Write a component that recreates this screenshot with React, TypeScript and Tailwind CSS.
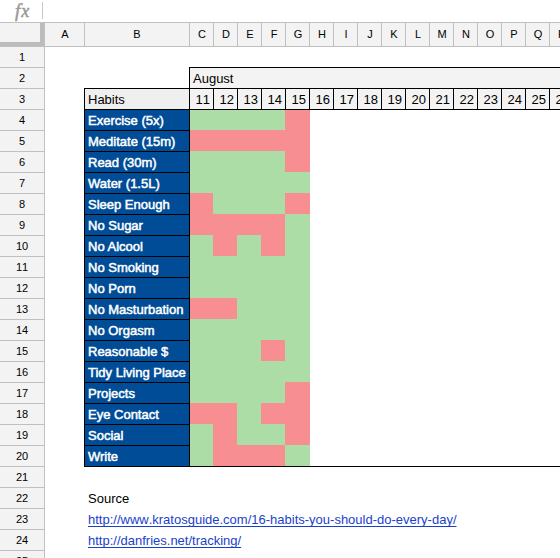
import React from 'react';

const columns = ['C', 'D', 'E', 'F', 'G', 'H', 'I', 'J', 'K', 'L', 'M', 'N', 'O', 'P', 'Q', 'R'];

// One letter per tracked day: g = done, r = missed
const habits: [string, string][] = [
  ['Exercise (5x)', 'ggggr'],
  ['Meditate (15m)', 'rrrrr'],
  ['Read (30m)', 'ggggr'],
  ['Water (1.5L)', 'ggggg'],
  ['Sleep Enough', 'rgggr'],
  ['No Sugar', 'rrrrg'],
  ['No Alcool', 'grgrg'],
  ['No Smoking', 'ggggg'],
  ['No Porn', 'ggggg'],
  ['No Masturbation', 'rrggg'],
  ['No Orgasm', 'ggggg'],
  ['Reasonable $', 'gggrg'],
  ['Tidy Living Place', 'ggggg'],
  ['Projects', 'ggggr'],
  ['Eye Contact', 'rrgrr'],
  ['Social', 'grggr'],
  ['Write', 'grrrg'],
];

const dayWidths = ['w-[23px]', 'w-6', 'w-6', 'w-6', 'w-[25px]'];

function Row({ n, children }: { n: number; children?: React.ReactNode }) {
  return (
    <div className="flex h-[21px] w-[600px] shrink-0">
      <div className="h-[21px] w-11 shrink-0 border-t border-[#c0c0c0] bg-[#f3f3f3] text-center text-[11px] leading-[20px] [font-kerning:none]">
        {n}
      </div>
      <div className={`w-10 shrink-0 border-l border-[#c0c0c0] ${n === 1 ? 'border-t' : ''}`} />
      {children}
    </div>
  );
}

function TextCell({ children }: { children: React.ReactNode }) {
  return <div className="pt-px pl-1 leading-[21px] whitespace-nowrap">{children}</div>;
}

function Link({ href }: { href: string }) {
  return (
    <a href={href} className="text-[#1a3fcb] underline decoration-1 underline-offset-[2px] [font-kerning:none] [text-decoration-skip-ink:none]">
      {href}
    </a>
  );
}

export default function App() {
  return (
    <div className="flex h-[558px] w-[560px] flex-col overflow-hidden bg-white font-['Liberation_Sans',Arial,sans-serif] text-[13px] text-black">
      <div className="flex h-[22px] shrink-0">
        <div className="h-[22px] w-[42px] pl-[15px] font-['Liberation_Serif',serif] text-[19px] leading-[21px] text-[#999] italic [-webkit-text-stroke:0.5px_#999]">
          f<span className="ml-px text-[18px]">x</span>
        </div>
        <div className="mt-0.5 h-[17px] w-px bg-[#c8c8c8]" />
      </div>

      <div className="flex h-6 w-[600px] shrink-0 border-t border-[#c0c0c0] bg-[#f3f3f3] text-center text-[11px] leading-[23px]">
        <div className="h-[23px] w-11 shrink-0 border-r-4 border-b-4 border-[#bcbcbc]" />
        <div className="w-10 shrink-0 border-l border-[#c0c0c0] pl-px">A</div>
        <div className="w-[105px] shrink-0 border-l border-[#c0c0c0]">B</div>
        {columns.map((c) => (
          <div key={c} className="w-6 shrink-0 border-l border-[#c0c0c0] pl-px">{c}</div>
        ))}
      </div>

      <div className="flex shrink-0 flex-col">
        <Row n={1}>
          <div className="flex-1 border-t border-[#c0c0c0]" />
        </Row>
        <Row n={2}>
          <div className="w-[105px] shrink-0" />
          <div className="flex-1 border-t border-l border-black bg-[#f3f3f3] pl-[3px] leading-[21px]">August</div>
        </Row>
        <Row n={3}>
          <div className="w-[105px] shrink-0 border-t border-l border-black bg-[#efefef] pl-[3px] leading-[21px]">Habits</div>
          {columns.map((c, i) => (
            <div key={c} className="w-6 shrink-0 border-t border-l border-black bg-[#f3f3f3] pr-[3px] text-right leading-[21px] [font-kerning:none]">
              {11 + i}
            </div>
          ))}
        </Row>
        {habits.map(([name, days], i) => (
          <Row key={name} n={i + 4}>
            <div className="w-[106px] shrink-0 border-x border-t border-black bg-[#004c97] pl-[3px] leading-[21px] whitespace-nowrap text-white [-webkit-text-stroke:0.5px_white]">
              {name}
            </div>
            <div className={`flex flex-1 ${i === 0 ? 'border-t border-black' : ''}`}>
              {days.split('').map((d, j) => (
                <div key={j} className={`${dayWidths[j]} ${d === 'g' ? 'bg-[#acdda6]' : 'bg-[#f78f92]'}`} />
              ))}
            </div>
          </Row>
        ))}
        <Row n={21}>
          <div className="flex-1 border-t border-black" />
        </Row>
        <Row n={22}>
          <TextCell>Source</TextCell>
        </Row>
        <Row n={23}>
          <TextCell><Link href="http://www.kratosguide.com/16-habits-you-should-do-every-day/" /></TextCell>
        </Row>
        <Row n={24}>
          <TextCell><Link href="http://danfries.net/tracking/" /></TextCell>
        </Row>
        <Row n={25} />
      </div>
    </div>
  );
}
